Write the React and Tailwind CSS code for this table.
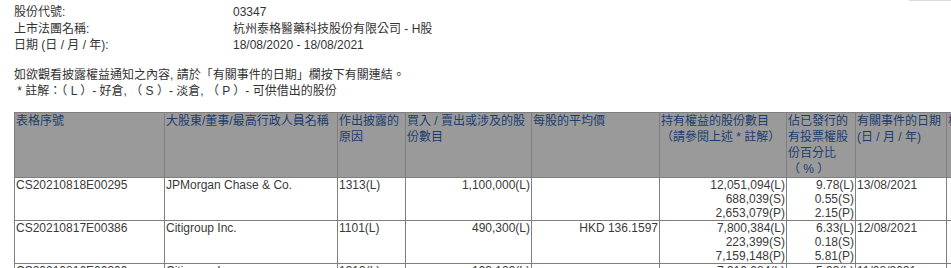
import React from "react";

const font = { fontFamily: '"Liberation Sans", Arial, "Noto Sans CJK TC", sans-serif' };

const headers = [
  "表格序號",
  "大股東/董事/最高行政人員名稱",
  "作出披露的原因",
  "買入 / 賣出或涉及的股份數目",
  "每股的平均價",
  "持有權益的股份數目（請參閱上述 * 註解）",
  <>
    佔已發行的有投票權股份百分比
    <br />
    <span className="whitespace-nowrap">（ % ）</span>
  </>,
  "有關事件的日期 (日 / 月 / 年)",
  "相聯法團權益",
];

const rows = [
  {
    id: "CS20210818E00295",
    name: "JPMorgan Chase & Co.",
    reason: "1313(L)",
    qty: "1,100,000(L)",
    price: "",
    held: ["12,051,094(L)", "688,039(S)", "2,653,079(P)"],
    pct: ["9.78(L)", "0.55(S)", "2.15(P)"],
    date: "13/08/2021",
  },
  {
    id: "CS20210817E00386",
    name: "Citigroup Inc.",
    reason: "1101(L)",
    qty: "490,300(L)",
    price: "HKD 136.1597",
    held: ["7,800,384(L)", "223,399(S)", "7,159,148(P)"],
    pct: ["6.33(L)", "0.18(S)", "5.81(P)"],
    date: "12/08/2021",
  },
  {
    id: "CS20210816E00300",
    name: "Citigroup Inc.",
    reason: "1313(L)",
    qty: "193,123(L)",
    price: "",
    held: ["7,310,084(L)", "223,399(S)", "7,159,148(P)"],
    pct: ["5.93(L)", "0.18(S)", "5.81(P)"],
    date: "11/08/2021",
  },
];

const widths = [150, 173, 68, 126, 128, 127, 69, 91, 100];

export default function App() {
  const th = "border border-[#7f7f7f] bg-[#9a9a9a] text-[#1c3d6e] font-normal text-left align-top px-px py-0 leading-[16px]";
  const td = "border border-[#7f7f7f] text-[#3a3a3a] align-top px-px py-0 leading-[14px] whitespace-nowrap";
  return (
    <div className="relative w-[951px] h-[268px] overflow-hidden bg-white text-[12px]" style={font}>
      <div className="absolute top-0 right-0 w-[42px] h-[1px] bg-[#d9d9d9]" />
      <div className="pl-[14px] pt-1 text-[#333333] leading-[16.5px]">
        <div className="grid grid-cols-[219px_1fr]">
          <div>股份代號:</div>
          <div>03347</div>
          <div>上市法團名稱:</div>
          <div>杭州泰格醫藥科技股份有限公司 - H股</div>
          <div>日期 (日 / 月 / 年):</div>
          <div>18/08/2020 - 18/08/2021</div>
        </div>
        <div className="mt-[13px]">
          <div>如欲觀看披露權益通知之內容, 請於「有關事件的日期」欄按下有關連結。</div>
          <div>&nbsp;* 註解：（ L ）- 好倉, （ S ）- 淡倉, （ P ）- 可供借出的股份</div>
        </div>
      </div>
      <table className="ml-[14px] mt-[12px] border-collapse table-fixed w-[1032px]">
        <colgroup>
          {widths.map((w, i) => (
            <col key={i} style={{ width: w }} />
          ))}
        </colgroup>
        <thead>
          <tr className="h-[65px]">
            {headers.map((h, i) => (
              <th key={i} className={th}>
                {h}
              </th>
            ))}
          </tr>
        </thead>
        <tbody>
          {rows.map((r) => (
            <tr key={r.id} className="h-[43px]">
              <td className={td}>{r.id}</td>
              <td className={td}>{r.name}</td>
              <td className={td}>{r.reason}</td>
              <td className={td + " text-right"}>{r.qty}</td>
              <td className={td + " text-right"}>{r.price}</td>
              <td className={td + " text-right"}>
                {r.held.map((x) => (
                  <div key={x}>{x}</div>
                ))}
              </td>
              <td className={td + " text-right"}>
                {r.pct.map((x) => (
                  <div key={x}>{x}</div>
                ))}
              </td>
              <td className={td}>{r.date}</td>
              <td className={td}></td>
            </tr>
          ))}
        </tbody>
      </table>
    </div>
  );
}
